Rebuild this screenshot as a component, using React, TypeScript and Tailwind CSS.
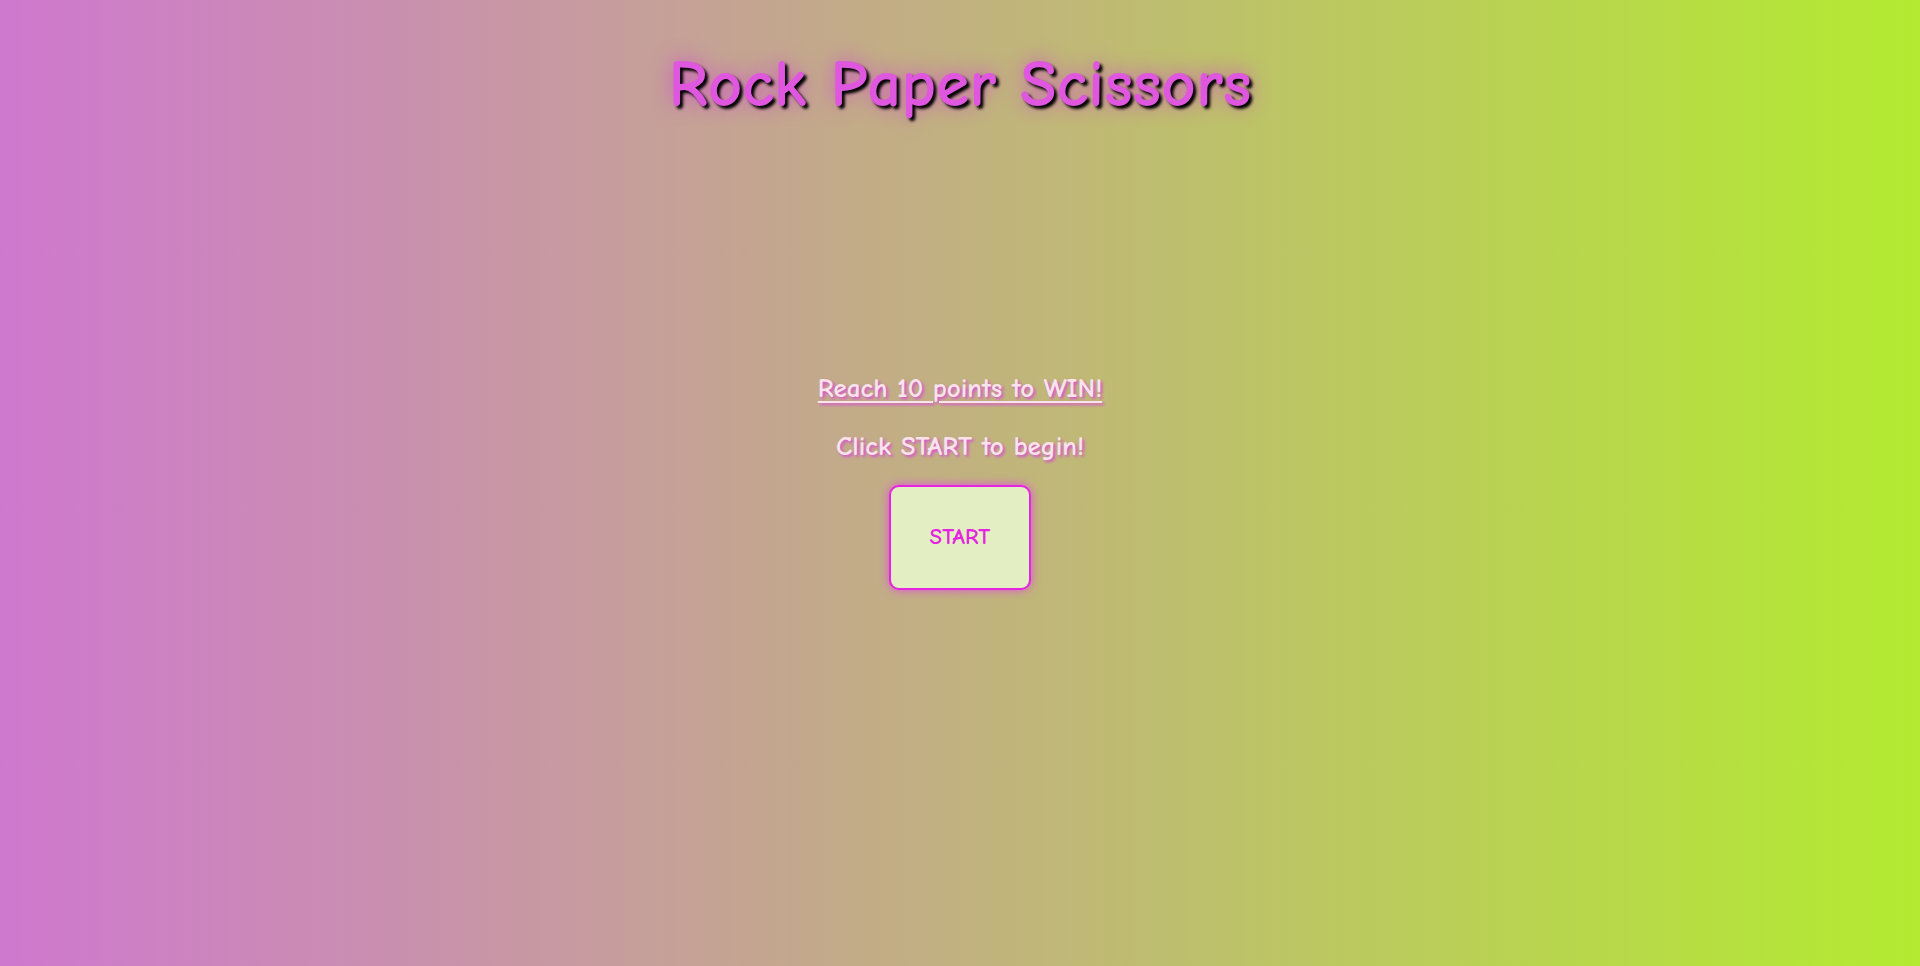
import React from 'react';

const font = { fontFamily: '"Comic Sans MS", "Comic Neue", "Open Sans", sans-serif' };

export default function App() {
  return (
    <div
      className="min-h-screen w-full bg-[linear-gradient(to_right,#cf78cf,#b3eb30)] flex flex-col items-center"
      style={font}
    >
      <h1 className="mt-[40px] text-[67px] leading-[90px] font-bold text-[#e057df] [text-shadow:3px_3px_3px_#000,0_0_20px_#d04fc8]">
        Rock Paper Scissors
      </h1>
      <div className="mt-[241px] flex flex-col items-center">
        <p className="text-[27px] leading-[36px] font-bold text-[#fae3ea] underline decoration-2 underline-offset-4 [text-shadow:2px_2px_3px_#d94fd4]">
          Reach 10 points to WIN!
        </p>
        <p className="mt-[22px] text-[27px] leading-[36px] font-bold text-[#fae3ea] [text-shadow:2px_2px_3px_#d94fd4]">
          Click START to begin!
        </p>
        <button className="mt-[20px] w-[142px] h-[105px] rounded-[10px] border-2 border-[#e524e0] bg-[#e3efc2] text-[23px] font-bold text-[#e524e0] shadow-[0_0_10px_#e04ddc]">
          START
        </button>
      </div>
    </div>
  );
}
